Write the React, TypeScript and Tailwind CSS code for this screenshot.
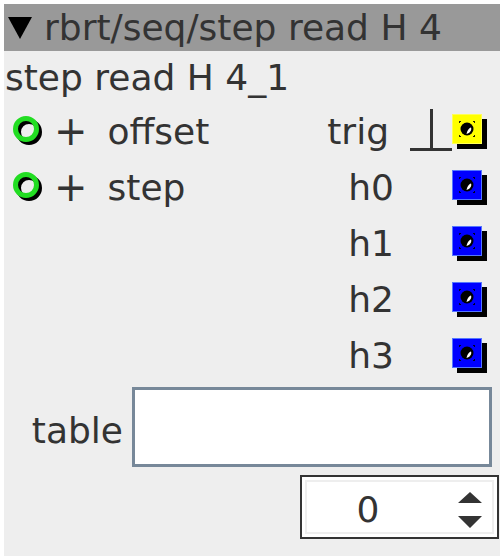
import React from "react";

const font = { fontFamily: '"DejaVu Sans", Verdana, sans-serif' };

function Inlet() {
  return (
    <svg width="36" height="34" viewBox="0 0 36 34" className="shrink-0">
      <circle cx="17" cy="18" r="10.5" fill="none" stroke="#000" strokeWidth="5" />
      <circle cx="14" cy="15" r="10.5" fill="none" stroke="#22dd22" strokeWidth="5" />
    </svg>
  );
}

function Outlet({ color }: { color: string }) {
  const edge = color === "#0000ff" ? "#5577ff" : "#ffff55";
  return (
    <svg width="36" height="36" viewBox="0 0 36 36" className="shrink-0">
      <rect x="5" y="5" width="30" height="30" fill="#000" />
      <rect x="0.5" y="0.5" width="29" height="29" fill={color} stroke={edge} />
      <circle cx="15" cy="15" r="6.5" fill="#000" />
      <path d="M14.5 20 C15 17 17 14 19 13.5 C20 16 18 19 14.5 20 Z" fill="#fff" />
      <g fill="#000" opacity="0.85">
        <rect x="7" y="7" width="2" height="1" />
        <rect x="7" y="7" width="1" height="2" />
        <rect x="21" y="7" width="2" height="1" />
        <rect x="22" y="7" width="1" height="2" />
        <rect x="7" y="22" width="2" height="1" />
        <rect x="7" y="21" width="1" height="2" />
        <rect x="21" y="22" width="2" height="1" />
        <rect x="22" y="21" width="1" height="2" />
      </g>
    </svg>
  );
}

function Ground() {
  return (
    <svg width="44" height="44" viewBox="0 0 44 44" className="shrink-0">
      <path d="M22.5 1 V41 M1 41.5 H43" stroke="#333" strokeWidth="3" fill="none" />
    </svg>
  );
}

export default function App() {
  const outputs = ["h0", "h1", "h2", "h3"];
  return (
    <div className="h-[560px] w-[504px] bg-white p-1" style={font}>
      <div className="flex h-[552px] w-[496px] flex-col bg-[#eeeeee] text-[#333333]">
        <div className="flex h-[47px] items-center bg-[#999999] pl-1 text-[36px] leading-none">
          <svg width="24" height="22" viewBox="0 0 24 22" className="mr-3 shrink-0">
            <path d="M0 0 H24 L12 22 Z" fill="#000" />
          </svg>
          <span>rbrt/seq/step read H 4</span>
        </div>
        <div className="h-[52px] pl-px pt-[2px] text-[36px] leading-[50px]">step read H 4_1</div>

        <div className="flex">
          <div className="flex w-[230px] flex-col">
            {["offset", "step"].map((name) => (
              <div key={name} className="flex h-14 items-center pl-2">
                <Inlet />
                <span className="ml-[6px] text-[40px] leading-none">+</span>
                <span className="ml-[20px] pt-[2px] text-[36px] leading-none">{name}</span>
              </div>
            ))}
          </div>
          <div className="flex flex-1 flex-col">
            <div className="flex h-14 items-center justify-end pr-3">
              <span className="pt-[2px] text-[36px] leading-none">trig</span>
              <div className="ml-5 mb-[2px]">
                <Ground />
              </div>
              <div className="-ml-[1px] mt-[2px]">
                <Outlet color="#ffff00" />
              </div>
            </div>
            {outputs.map((o) => (
              <div key={o} className="flex h-14 items-center justify-end pr-3">
                <span className="pt-[2px] text-[36px] leading-none">{o}</span>
                <div className="ml-[58px] mt-[2px]">
                  <Outlet color="#0000ff" />
                </div>
              </div>
            ))}
          </div>
        </div>

        <div className="mt-[4px] flex items-center">
          <span className="mt-2 w-[119px] text-right text-[36px] leading-none">table</span>
          <div className="ml-[9px] h-[80px] w-[360px] border-[3px] border-[#778899] bg-white" />
        </div>

        <div className="mt-2 flex justify-end pr-px">
          <div className="flex h-[64px] w-[199px] items-center border-2 border-[#333333] bg-white p-[3px]">
            <div className="flex h-full w-full items-center border-2 border-[#eeeeee] bg-white pt-[5px]">
              <span className="w-[122px] text-center text-[36px] leading-none">0</span>
              <svg width="26" height="38" viewBox="0 0 26 38" className="ml-[28px]">
                <path d="M13 1 L25 12 H1 Z M1 25 H25 L13 37 Z" fill="#333" />
              </svg>
            </div>
          </div>
        </div>
      </div>
    </div>
  );
}
